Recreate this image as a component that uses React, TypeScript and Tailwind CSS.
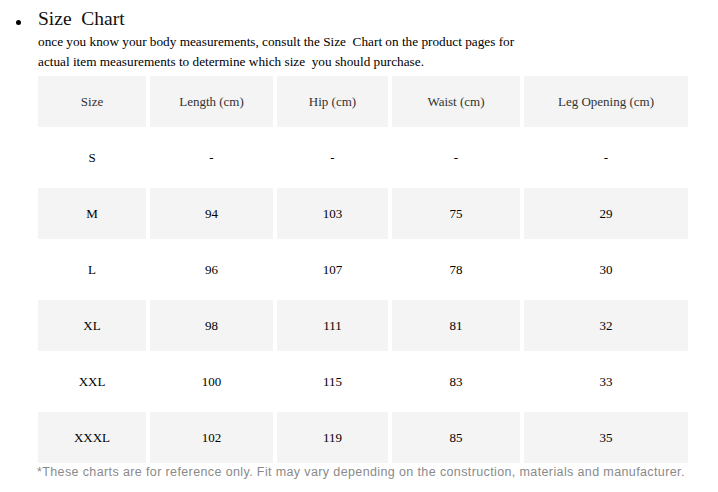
import React from "react";

const headers = ["Size", "Length (cm)", "Hip (cm)", "Waist (cm)", "Leg Opening (cm)"];
const rows = [
  ["S", "-", "-", "-", "-"],
  ["M", "94", "103", "75", "29"],
  ["L", "96", "107", "78", "30"],
  ["XL", "98", "111", "81", "32"],
  ["XXL", "100", "115", "83", "33"],
  ["XXXL", "102", "119", "85", "35"],
];

export default function App() {
  const serif = { fontFamily: '"Liberation Serif", "Times New Roman", serif' };
  return (
    <div className="w-[718px] h-[492px] bg-white overflow-hidden relative" style={serif}>
      <div className="pl-[38px] pt-[6px] relative">
        <span className="absolute left-[16px] top-[20px] w-[5px] h-[5px] rounded-full bg-black" />
        <div className="text-[19.5px] leading-[26px] text-[#111]">Size&nbsp; Chart</div>
        <div className="text-[13.25px] leading-[20px] text-black">
          once you know your body measurements, consult the Size&nbsp; Chart on the product pages for
        </div>
        <div className="text-[13.25px] leading-[20px] text-black">
          actual item measurements to determine which size&nbsp; you should purchase.
        </div>
        <div className="grid grid-cols-[108px_123px_111px_128px_164px] gap-x-[4px] gap-y-[5px] mt-[4px]">
          {headers.map((h) => (
            <div key={h} className="h-[51px] bg-[#f4f4f4] flex items-center justify-center text-[13px] text-[#333]">
              {h}
            </div>
          ))}
          {rows.map((r, i) =>
            r.map((c, j) => (
              <div
                key={i + "-" + j}
                className={
                  "h-[51px] flex items-center justify-center text-[13px] text-black " +
                  (i % 2 === 1 ? "bg-[#f4f4f4]" : "bg-white")
                }
              >
                {c}
              </div>
            ))
          )}
        </div>
        <div
          className="text-[12.5px] leading-[16px] text-[#8a8a8a] mt-[1px] -ml-[1px] tracking-[0.38px]"
          style={{ fontFamily: '"Liberation Sans", Arial, sans-serif' }}
        >
          *These charts are for reference only. Fit may vary depending on the construction, materials and manufacturer.
        </div>
      </div>
    </div>
  );
}
